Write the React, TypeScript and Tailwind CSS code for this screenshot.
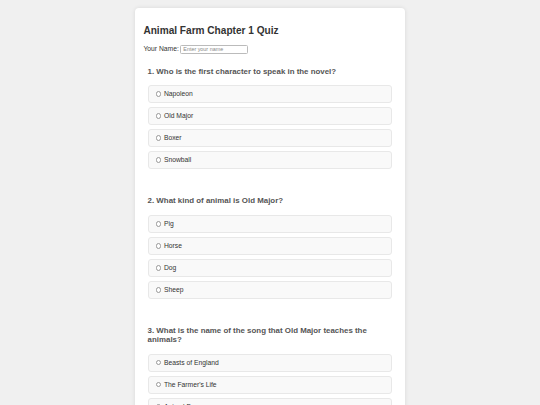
import React from "react";

interface Question {
  id: number;
  text: string;
  options: string[];
}

const QUESTIONS: Question[] = [
  {
    id: 1,
    text: "Who is the first character to speak in the novel?",
    options: ["Napoleon", "Old Major", "Boxer", "Snowball"],
  },
  {
    id: 2,
    text: "What kind of animal is Old Major?",
    options: ["Pig", "Horse", "Dog", "Sheep"],
  },
  {
    id: 3,
    text: "What is the name of the song that Old Major teaches the animals?",
    options: ["Beasts of England", "The Farmer's Life", "Animal Dreams", "Sugarcandy Mountain"],
  },
];

export default function App() {
  return (
    <div className="min-h-screen bg-[#f0f0f0] pt-[8.4px] font-['Liberation_Sans',Arial,sans-serif] text-[#333]">
      <div className="mx-auto w-[270px] rounded-[4px] bg-white p-[8.4px] shadow-[0_0_4px_rgba(0,0,0,0.1)]">
        <h1 className="mt-[8.2px] mb-[8.2px] text-[10.1px] leading-[11.6px] font-bold text-[#333]">
          Animal Farm Chapter 1 Quiz
        </h1>
        <div className="flex h-[9px] items-center text-[6.75px]">
          <label htmlFor="name">Your Name:</label>
          <input
            id="name"
            type="text"
            placeholder="Enter your name"
            className="ml-[1.5px] h-[9px] w-[68px] rounded-[1.5px] border border-[#bbb] px-[2px] text-[5.4px] outline-none placeholder:text-[#888]"
          />
        </div>

        {QUESTIONS.map((q, qi) => (
          <div key={q.id} className={`px-[4.2px] ${qi === 0 ? "mt-[12.8px]" : "mt-[27.2px]"}`}>
            <h3 className="mb-[9.6px] text-[7.9px] leading-[9px] font-bold text-[#555]">
              {q.id}. {q.text}
            </h3>
            <div className="flex flex-col gap-[4px]">
              {q.options.map((o) => (
                <label
                  key={o}
                  className="flex h-[18px] items-center rounded-[3px] border border-[#e8e8e8] bg-[#f9f9f9] pl-[7.3px] text-[6.75px]"
                >
                  <input
                    type="radio"
                    name={`q${q.id}`}
                    className="h-[5.5px] w-[5.5px] appearance-none rounded-full border-[0.5px] border-[#999] bg-white"
                  />
                  <span className="ml-[2.5px]">{o}</span>
                </label>
              ))}
            </div>
          </div>
        ))}
      </div>
    </div>
  );
}
